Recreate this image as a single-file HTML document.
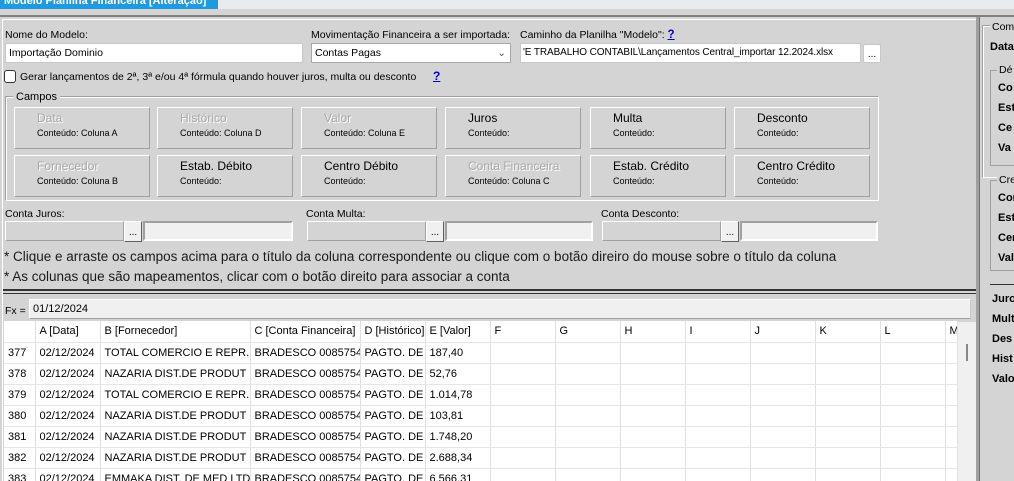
<!DOCTYPE html>
<html><head><meta charset="utf-8"><style>
*{margin:0;padding:0;box-sizing:border-box}
html,body{width:1014px;height:481px;overflow:hidden}
body{background:#d4d4d4;font-family:"Liberation Sans",Tahoma,sans-serif;font-size:10.5px;color:#000;position:relative}
.a{position:absolute;white-space:nowrap}
.inp{position:absolute;background:#fff;border:1px solid #c8c8c8;padding-left:3px;line-height:18px;font-size:10.5px;overflow:hidden;white-space:nowrap}
.btn{position:absolute;width:136px;height:42px;border:1px solid;border-color:#fff #a0a0a0 #a0a0a0 #fff;background:#d4d4d4}
.btn .t{position:absolute;left:22px;top:3px;font-size:12px}
.btn .s{position:absolute;left:22px;top:20px;font-size:9px}
.dis{color:#a8a8a8;text-shadow:1px 1px 0 #fff}
.gf{position:absolute;background:#d4d4d4;border:1px solid;border-color:#fff #a0a0a0 #a0a0a0 #fff}
.gf2{position:absolute;background:#f0f0f0;border:2px solid;border-color:#a0a0a0 #fff #fff #a0a0a0}
.dot{position:absolute;width:18px;height:21px;background:#f0f0f0;border:1px solid;border-color:#fff #606060 #606060 #fff;font-size:10px;text-align:center;line-height:22px}
.note{position:absolute;left:4px;font-size:13.5px;color:#1a1a1a;white-space:nowrap}
.grid{position:absolute;left:4px;top:321px;width:954px;height:160px;overflow:hidden;background:#fff}
table{border-collapse:collapse;table-layout:fixed;width:953px}
td{height:21px;line-height:20px;border-right:1px solid #e0e0e0;border-bottom:1px solid #e6e6e6;font-size:11px;padding:0 0 0 4px;white-space:nowrap;overflow:hidden;background:#fff}
.rp b{position:absolute;font-size:11px;white-space:nowrap}
</style></head><body>
<div class="a" style="left:0;top:0;width:1014px;height:9px;background:#e9ecef"></div>
<div class="a" style="left:0;top:0;width:218px;height:9px;background:#1e9be0;color:#fff;font-weight:bold;font-size:11px;line-height:2px;padding-left:4px;overflow:hidden">Modelo Planilha Financeira [Alteração]</div>
<div class="a" style="left:0;top:15px;width:1014px;height:2px;background:#808080"></div>
<div class="a" style="left:2px;top:19px;width:975px;height:462px;border-left:1px solid #fff;border-top:1px solid #fff;background:#d4d4d4"></div>
<div class="a" style="left:976px;top:17px;width:4px;height:464px;background:#a0a0a0;border-right:1px solid #707070"></div>

<div class="a" style="left:5px;top:29px">Nome do Modelo:</div>
<div class="inp" style="left:5px;top:43px;width:298px;height:20px">Importação Dominio</div>
<div class="a" style="left:311px;top:29px">Movimentação Financeira a ser importada:</div>
<div class="inp" style="left:311px;top:43px;width:200px;height:20px;border-color:#a8a8a8">Contas Pagas<span style="position:absolute;right:4px;top:0;color:#555">&#8964;</span></div>
<div class="a" style="left:520px;top:29px">Caminho da Planilha "Modelo": <b style="color:#0000c0;text-decoration:underline;font-size:11.5px">?</b></div>
<div class="inp" style="left:520px;top:43px;width:341px;height:20px;padding-left:2px;font-size:10px;letter-spacing:-0.1px">'E TRABALHO CONTABIL\Lançamentos Central_importar 12.2024.xlsx</div>
<div class="a" style="left:863px;top:44px;width:18px;height:19px;background:#fff;border:1px solid #c8c8c8;border-radius:2px;text-align:center;font-size:10px;line-height:20px">...</div>

<div class="a" style="left:4px;top:70px;width:12px;height:13px;border:1px solid #333;border-radius:3px;background:#fff"></div>
<div class="a" style="left:20px;top:71px">Gerar lançamentos de 2ª, 3ª e/ou 4ª fórmula quando houver juros, multa ou desconto</div>
<div class="a" style="left:433px;top:69px;color:#0000c0;font-weight:bold;text-decoration:underline;font-size:12px">?</div>

<div class="a" style="left:5px;top:96px;width:874px;height:105px;border:1px solid;border-color:#a0a0a0 #fff #fff #a0a0a0;box-shadow:inset 1px 1px 0 #fff"></div>
<div class="a" style="left:13px;top:91px;background:#d4d4d4;padding:0 3px;font-size:11px">Campos</div>

<div class="btn" style="left:14px;top:107px"><div class="t dis">Data</div><div class="s">Conteúdo: Coluna A</div></div>
<div class="btn" style="left:157px;top:107px"><div class="t dis">Histórico</div><div class="s">Conteúdo: Coluna D</div></div>
<div class="btn" style="left:301px;top:107px"><div class="t dis">Valor</div><div class="s">Conteúdo: Coluna E</div></div>
<div class="btn" style="left:445px;top:107px"><div class="t">Juros</div><div class="s">Conteúdo:</div></div>
<div class="btn" style="left:590px;top:107px"><div class="t">Multa</div><div class="s">Conteúdo:</div></div>
<div class="btn" style="left:734px;top:107px"><div class="t">Desconto</div><div class="s">Conteúdo:</div></div>
<div class="btn" style="left:14px;top:155px"><div class="t dis">Fornecedor</div><div class="s">Conteúdo: Coluna B</div></div>
<div class="btn" style="left:157px;top:155px"><div class="t">Estab. Débito</div><div class="s">Conteúdo:</div></div>
<div class="btn" style="left:301px;top:155px"><div class="t">Centro Débito</div><div class="s">Conteúdo:</div></div>
<div class="btn" style="left:445px;top:155px"><div class="t dis">Conta Financeira</div><div class="s">Conteúdo: Coluna C</div></div>
<div class="btn" style="left:590px;top:155px"><div class="t">Estab. Crédito</div><div class="s">Conteúdo:</div></div>
<div class="btn" style="left:734px;top:155px"><div class="t">Centro Crédito</div><div class="s">Conteúdo:</div></div>

<div class="a" style="left:5px;top:208px">Conta Juros:</div>
<div class="gf" style="left:5px;top:221px;width:119px;height:20px"></div>
<div class="dot" style="left:124px;top:221px">...</div>
<div class="gf2" style="left:143px;top:221px;width:150px;height:20px"></div>
<div class="a" style="left:306px;top:208px">Conta Multa:</div>
<div class="gf" style="left:307px;top:221px;width:119px;height:20px"></div>
<div class="dot" style="left:426px;top:221px">...</div>
<div class="gf2" style="left:445px;top:221px;width:148px;height:20px"></div>
<div class="a" style="left:601px;top:208px">Conta Desconto:</div>
<div class="gf" style="left:602px;top:221px;width:119px;height:20px"></div>
<div class="dot" style="left:721px;top:221px">...</div>
<div class="gf2" style="left:740px;top:221px;width:138px;height:20px"></div>

<div class="note" style="top:249px">* Clique e arraste os campos acima para o título da coluna correspondente ou clique com o botão direiro do mouse sobre o título da coluna</div>
<div class="note" style="top:269px">* As colunas que são mapeamentos, clicar com o botão direito para associar a conta</div>

<div class="a" style="left:3px;top:289px;width:973px;height:2px;background:#333"></div>
<div class="a" style="left:3px;top:293px;width:973px;height:1px;background:#333"></div>
<div class="a" style="left:3px;top:294px;width:973px;height:187px;background:#d4d4d4"></div>
<div class="a" style="left:5px;top:305px">Fx =</div>
<div class="a" style="left:29px;top:299px;width:942px;height:20px;background:#f0f0f0;border:1px solid #fff;border-right-color:#c8c8c8;border-bottom-color:#a0a0a0;padding-left:3px;line-height:18px;font-size:11px">01/12/2024</div>

<div class="grid"><table>
<colgroup><col style="width:31px"><col style="width:65px"><col style="width:150px"><col style="width:110px"><col style="width:65px"><col style="width:65px"><col style="width:65px"><col style="width:65px"><col style="width:65px"><col style="width:65px"><col style="width:65px"><col style="width:65px"><col style="width:65px"><col style="width:12px"></colgroup>
<tr><td></td><td>A [Data]</td><td>B [Fornecedor]</td><td>C [Conta Financeira]</td><td>D [Histórico]</td><td>E [Valor]</td><td>F</td><td>G</td><td>H</td><td>I</td><td>J</td><td>K</td><td>L</td><td>M</td></tr>
<tr><td>377</td><td>02/12/2024</td><td>TOTAL COMERCIO E REPR.I</td><td>BRADESCO 0085754</td><td>PAGTO. DE</td><td>187,40</td><td></td><td></td><td></td><td></td><td></td><td></td><td></td><td></td></tr>
<tr><td>378</td><td>02/12/2024</td><td>NAZARIA DIST.DE PRODUT</td><td>BRADESCO 0085754</td><td>PAGTO. DE</td><td>52,76</td><td></td><td></td><td></td><td></td><td></td><td></td><td></td><td></td></tr>
<tr><td>379</td><td>02/12/2024</td><td>TOTAL COMERCIO E REPR.I</td><td>BRADESCO 0085754</td><td>PAGTO. DE</td><td>1.014,78</td><td></td><td></td><td></td><td></td><td></td><td></td><td></td><td></td></tr>
<tr><td>380</td><td>02/12/2024</td><td>NAZARIA DIST.DE PRODUT</td><td>BRADESCO 0085754</td><td>PAGTO. DE</td><td>103,81</td><td></td><td></td><td></td><td></td><td></td><td></td><td></td><td></td></tr>
<tr><td>381</td><td>02/12/2024</td><td>NAZARIA DIST.DE PRODUT</td><td>BRADESCO 0085754</td><td>PAGTO. DE</td><td>1.748,20</td><td></td><td></td><td></td><td></td><td></td><td></td><td></td><td></td></tr>
<tr><td>382</td><td>02/12/2024</td><td>NAZARIA DIST.DE PRODUT</td><td>BRADESCO 0085754</td><td>PAGTO. DE</td><td>2.688,34</td><td></td><td></td><td></td><td></td><td></td><td></td><td></td><td></td></tr>
<tr><td>383</td><td>02/12/2024</td><td>EMMAKA DIST. DE MED LTD</td><td>BRADESCO 0085754</td><td>PAGTO. DE</td><td>6.566,31</td><td></td><td></td><td></td><td></td><td></td><td></td><td></td><td></td></tr>
</table></div>
<div class="a" style="left:958px;top:322px;width:18px;height:159px;background:#f0f0f0"></div>
<div class="a" style="left:966px;top:344px;width:2px;height:17px;background:#888"></div>

<div class="rp">
<div class="a" style="left:983px;top:26px;width:40px;height:152px;border:1px solid #fff;border-right:0;box-shadow:-1px -1px 0 #a0a0a0"></div>
<div class="a" style="left:990px;top:21px;background:#d4d4d4;padding:0 2px">Com</div>
<b style="left:990px;top:41px">Data</b>
<div class="a" style="left:990px;top:70px;width:30px;height:96px;border:1px solid #a0a0a0;border-right:0"></div>
<div class="a" style="left:997px;top:64px;background:#d4d4d4;padding:0 2px">Dé</div>
<b style="left:998px;top:82px">Co</b><b style="left:998px;top:102px">Est</b><b style="left:998px;top:122px">Ce</b><b style="left:998px;top:142px">Va</b>
<div class="a" style="left:990px;top:180px;width:30px;height:91px;border:1px solid #a0a0a0;border-right:0"></div>
<div class="a" style="left:997px;top:174px;background:#d4d4d4;padding:0 2px">Cre</div>
<b style="left:998px;top:192px">Con</b><b style="left:998px;top:212px">Est</b><b style="left:998px;top:232px">Cer</b><b style="left:998px;top:252px">Val</b>
<div class="a" style="left:990px;top:284px;width:30px;height:1px;background:#333"></div>
<b style="left:992px;top:293px">Juro</b><b style="left:992px;top:313px">Mult</b><b style="left:992px;top:333px">Des</b><b style="left:992px;top:353px">Hist</b><b style="left:992px;top:373px">Valo</b>
</div>
</body></html>
